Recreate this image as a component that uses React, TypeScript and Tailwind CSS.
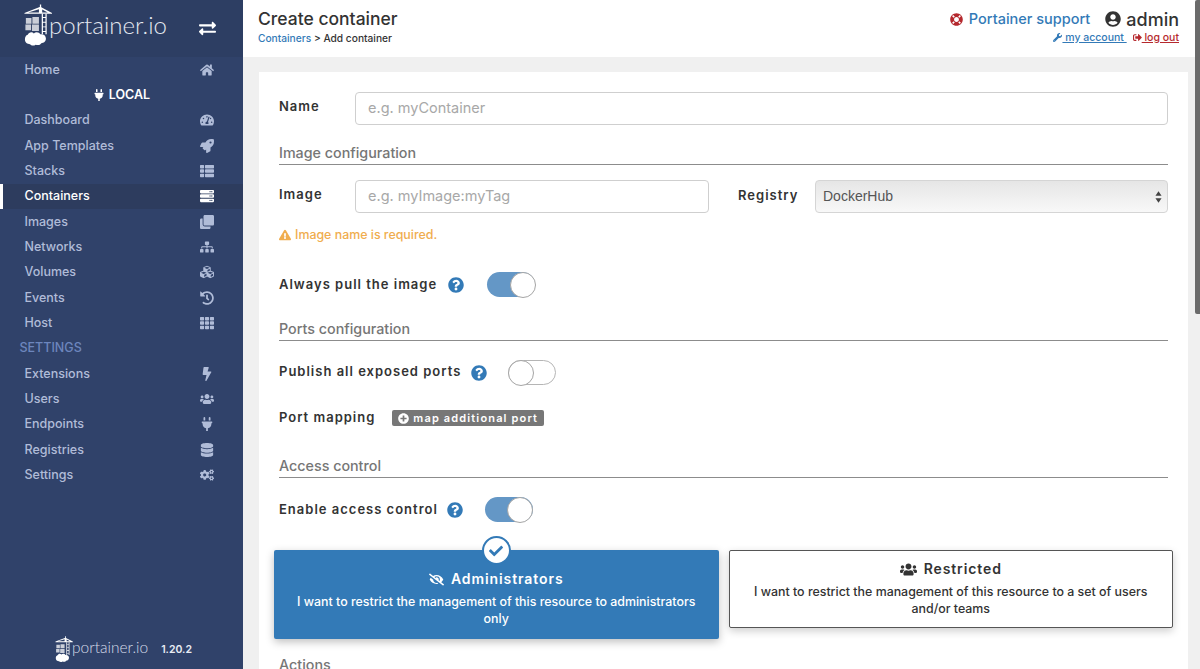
import {
  FaBolt, FaCheck, FaClone, FaCogs, FaDatabase, FaExchangeAlt, FaExclamationTriangle, FaEyeSlash, FaHistory, FaHome,
  FaLifeRing, FaPlug, FaPlusCircle, FaQuestionCircle, FaRocket, FaServer, FaSignOutAlt, FaSitemap, FaTachometerAlt,
  FaTh, FaThList, FaUserCircle, FaUsers, FaWrench, FaCubes,
} from 'react-icons/fa'
import type { IconType } from 'react-icons'

const topNav: [string, IconType][] = [
  ['Dashboard', FaTachometerAlt],
  ['App Templates', FaRocket],
  ['Stacks', FaThList],
  ['Containers', FaServer],
  ['Images', FaClone],
  ['Networks', FaSitemap],
  ['Volumes', FaCubes],
  ['Events', FaHistory],
  ['Host', FaTh],
]

const settingsNav: [string, IconType][] = [
  ['Extensions', FaBolt],
  ['Users', FaUsers],
  ['Endpoints', FaPlug],
  ['Registries', FaDatabase],
  ['Settings', FaCogs],
]

function Crane({ className }: { className: string }) {
  return (
    <svg viewBox="0 0 30 46" className={className} fill="#fff" aria-hidden="true">
      <path d="M17 0.5h1.400v4h-1.400z" />
      <path d="M0.500 9.500 17.500 3l12.500 6.500v1H0.500z M4.500 9h11.500V5.500z M19.500 9h6l-6-3.200z" fillRule="evenodd" />
      <path d="M19 10.500h1.300v22H19z M23 10.500h1.300v22H23z M19 14h5v1h-5z M19 19h5v1h-5z M19 24h5v1h-5z M19 29h5v1h-5z" />
      <path d="M2 15h6v6H2z M9 14h7v7H9z M1.500 22h6v6h-6z M8.500 22h7.500v7H8.500z" opacity="0.75" />
      <path d="M4 33c1-3 5-3.500 6.500-1.500 2-2 6-1.500 7 1 3-0.500 6 1 6 4.500 0 3-2.500 5-5 5-1 2-4 2.500-6 1.500-2 1.500-5 1-6-0.500C3.500 43 1 41 1 38c0-2.500 1-4.500 3-5z" />
    </svg>
  )
}

function NavRow({ label, Icon, active }: { label: string; Icon: IconType; active?: boolean }) {
  return (
    <div className={`flex h-[25.33px] items-center justify-between pr-[28px] text-[12.500px] font-medium ${active ? 'border-l-[3px] border-white bg-[#2d3c5e] pl-[21.500px] text-white' : 'pl-[24.500px] text-[#b0bcd8]'}`}>
      <span className="mt-[1px]">{label}</span>
      <span className="flex w-[16px] justify-center">
        <Icon className="h-[14px] w-[14px]" />
      </span>
    </div>
  )
}

function Sidebar() {
  return (
    <aside className="flex h-full w-[243px] shrink-0 flex-col bg-[#30426a] font-['Inter',sans-serif]">
      <div className="flex h-[57px] items-center bg-[#2d3e63] pl-[24px] pr-[27px]">
        <Crane className="mt-[4px] h-[43px] w-[28px] self-start" />
        <span className="ml-[-3px] mt-[-7px] font-['Lato',sans-serif] text-[24px] font-light text-[#e4e8f0]">portainer.io</span>
        <FaExchangeAlt className="ml-auto h-[17px] w-[17px] text-white" />
      </div>
      <NavRow label="Home" Icon={FaHome} />
      <div className="flex h-[25.33px] items-center justify-center gap-[4px] text-[12.500px] font-semibold text-white">
        <FaPlug className="h-[12px] w-[12px]" />
        LOCAL
      </div>
      {topNav.map(([label, Icon]) => (
        <NavRow key={label} label={label} Icon={Icon} active={label === 'Containers'} />
      ))}
      <div className="flex h-[25.33px] items-center pl-[19.500px] text-[12.500px] font-medium text-[#6d86bd]">SETTINGS</div>
      {settingsNav.map(([label, Icon]) => (
        <NavRow key={label} label={label} Icon={Icon} />
      ))}
      <div className="mb-[6px] mt-auto flex items-center pl-[55px]">
        <Crane className="h-[27px] w-[18px]" />
        <span className="ml-[-1px] mt-[-3px] font-['Lato',sans-serif] text-[15.500px] font-light text-[#d5dbe8]">portainer.io</span>
        <span className="ml-[13px] text-[10.500px] font-semibold text-[#e8ecf4]">1.20.2</span>
      </div>
    </aside>
  )
}

function Header() {
  return (
    <header className="flex h-[57px] shrink-0 justify-between bg-white pl-[15px] pr-[21px]">
      <div>
        <div className="mt-[9px] text-[17.500px] font-medium leading-[20px] text-[#333]">Create container</div>
        <div className="mt-[2px] text-[10.200px] font-medium leading-[14px] text-[#333]">
          <span className="text-[#337ab7]">Containers</span> &gt; Add container
        </div>
      </div>
      <div className="flex flex-col items-end">
        <div className="mt-[9px] flex h-[20px] items-center text-[14.500px] font-medium">
          <FaLifeRing className="h-[13px] w-[13px] text-[#b5292e]" />
          <span className="ml-[6px] text-[#337ab7]">Portainer support</span>
          <FaUserCircle className="ml-[15px] h-[16px] w-[16px] text-[#333]" />
          <span className="ml-[5px] text-[18px] text-[#333]">admin</span>
        </div>
        <div className="mt-[1px] flex h-[15px] items-center text-[10.500px] font-medium">
          <FaWrench className="h-[9px] w-[9px] text-[#337ab7]" />
          <span className="whitespace-pre text-[#337ab7] underline"> my account </span>
          <FaSignOutAlt className="ml-[6px] h-[9px] w-[9px] text-[#b5292e]" />
          <span className="whitespace-pre text-[#b5292e] underline"> log out</span>
        </div>
      </div>
    </header>
  )
}

function Section({ title, className }: { title: string; className: string }) {
  return (
    <div className={`h-[21px] border-b border-[#8c8c8c] text-[14.300px] font-medium leading-[17px] text-[#767676] ${className}`}>{title}</div>
  )
}

function Switch({ on, className }: { on: boolean; className: string }) {
  return (
    <div className={`relative h-[25px] w-[48px] rounded-full ${on ? 'bg-[#6497c6]' : 'border border-[#b5b5b5] bg-white'} ${className}`}>
      <div className={`absolute top-[-0.500px] h-[26px] w-[26px] rounded-full border border-[#a5a5a5] bg-white ${on ? 'right-[-0.500px]' : 'left-[-1px] top-[-1px]'}`} />
    </div>
  )
}

function Label({ children, className = '' }: { children: string; className?: string }) {
  return <span className={`text-[13px] font-semibold tracking-[1px] text-[#333] ${className}`}>{children}</span>
}

function Help({ className }: { className: string }) {
  return <FaQuestionCircle className={`h-[16px] w-[16px] text-[#337ab7] ${className}`} />
}

function TextInput({ placeholder, className }: { placeholder: string; className: string }) {
  return (
    <input
      placeholder={placeholder}
      readOnly
      className={`h-[33px] rounded-[4px] border border-[#cfcfcf] bg-white px-[12px] pb-[2px] text-[14.500px] placeholder:text-[#a8a8a8] ${className}`}
    />
  )
}

function Form() {
  return (
    <div className="ml-[16px] mr-[12px] mt-[15px] h-[700px] bg-white px-[20px] pt-[20px]">
      <div className="flex h-[33px] items-center">
        <Label className="mt-[-4px] w-[76px]">Name</Label>
        <TextInput placeholder="e.g. myContainer" className="flex-1" />
      </div>
      <Section title="Image configuration" className="mt-[19px]" />
      <div className="mt-[15px] flex h-[33px] items-center">
        <Label className="mt-[-4px] w-[76px]">Image</Label>
        <TextInput placeholder="e.g. myImage:myTag" className="w-[354px]" />
        <Label className="ml-[29px] mt-[-2px] w-[77px]">Registry</Label>
        <div className="flex h-[33px] flex-1 items-center justify-between rounded-[4px] border border-[#d5d5d5] bg-gradient-to-b from-[#e6e6e6] to-[#f8f8f8] pl-[7px] pr-[5px] font-['Liberation_Sans',sans-serif] text-[14px] text-[#555]">
          DockerHub
          <svg viewBox="0 0 8 14" className="h-[14px] w-[7px]" fill="#444" aria-hidden="true">
            <path d="M4 0.500 7.500 5.500H0.500z M4 13.500 0.500 8.500H7.500z" />
          </svg>
        </div>
      </div>
      <div className="mt-[14px] flex h-[16px] items-center text-[12.400px] font-medium text-[#f0ad4e]">
        <FaExclamationTriangle className="mr-[4px] h-[12px] w-[12px]" />
        Image name is required.
      </div>
      <div className="mt-[29px] flex h-[25px] items-center">
        <Label>Always pull the image</Label>
        <Help className="ml-[11px]" />
        <Switch on className="ml-[23px]" />
      </div>
      <Section title="Ports configuration" className="mt-[23px]" />
      <div className="mt-[19px] flex h-[25px] items-center">
        <Label className="mt-[-2px]">Publish all exposed ports</Label>
        <Help className="ml-[10px]" />
        <Switch on={false} className="ml-[21px]" />
      </div>
      <div className="mt-[25px] flex h-[16px] items-center">
        <Label>Port mapping</Label>
        <span className="ml-[17px] flex h-[16px] items-center gap-[4px] rounded-[2px] bg-[#777] px-[6px] text-[11px] font-semibold tracking-[1.150px] text-white">
          <FaPlusCircle className="h-[11px] w-[11px]" />
          map additional port
        </span>
      </div>
      <Section title="Access control" className="mt-[31px]" />
      <div className="mt-[19px] flex h-[25px] items-center">
        <Label>Enable access control</Label>
        <Help className="ml-[9px]" />
        <Switch on className="ml-[22px]" />
      </div>
      <div className="mx-[-5px] mt-[28px] flex items-start gap-[10px]">
        <div className="relative flex h-[89px] w-[445px] flex-col items-center rounded-[2px] bg-[#337ab7] px-[16px] pt-[20px] text-center text-white shadow-[0_3px_8px_rgba(0,0,0,0.25)]">
          <div className="absolute top-[-14px] flex h-[29px] w-[29px] items-center justify-center rounded-full border-2 border-[#337ab7] bg-white text-[#337ab7]">
            <FaCheck className="h-[14px] w-[14px]" />
          </div>
          <div className="flex items-center gap-[7px] text-[14px] font-semibold leading-[18px] tracking-[0.900px]">
            <FaEyeSlash className="h-[15px] w-[15px]" />
            Administrators
          </div>
          <p className="mt-[5px] text-[12.400px] font-medium leading-[17px]">I want to restrict the management of this resource to administrators only</p>
        </div>
        <div className="flex h-[78px] w-[445px] flex-col items-center rounded-[2px] border border-[#555] bg-white px-[16px] pt-[9px] text-center text-[#333] shadow-[0_3px_8px_rgba(0,0,0,0.2)]">
          <div className="flex items-center gap-[7px] text-[14px] font-semibold leading-[18px] tracking-[0.900px]">
            <FaUsers className="h-[17px] w-[17px]" />
            Restricted
          </div>
          <p className="mt-[5px] text-[12.400px] font-medium leading-[17px]">I want to restrict the management of this resource to a set of users and/or teams</p>
        </div>
      </div>
      <Section title="Actions" className="mt-[17px] border-b-0" />
    </div>
  )
}

export default function App() {
  return (
    <div className="relative flex h-[669px] w-[1200px] overflow-hidden bg-[#f0f0f0] font-['Inter',sans-serif]">
      <Sidebar />
      <main className="min-w-0 flex-1">
        <Header />
        <Form />
      </main>
      <div className="absolute right-0 top-0 h-[314px] w-[5px] rounded-l-[2px] bg-[#6b6b6b]" />
    </div>
  )
}
